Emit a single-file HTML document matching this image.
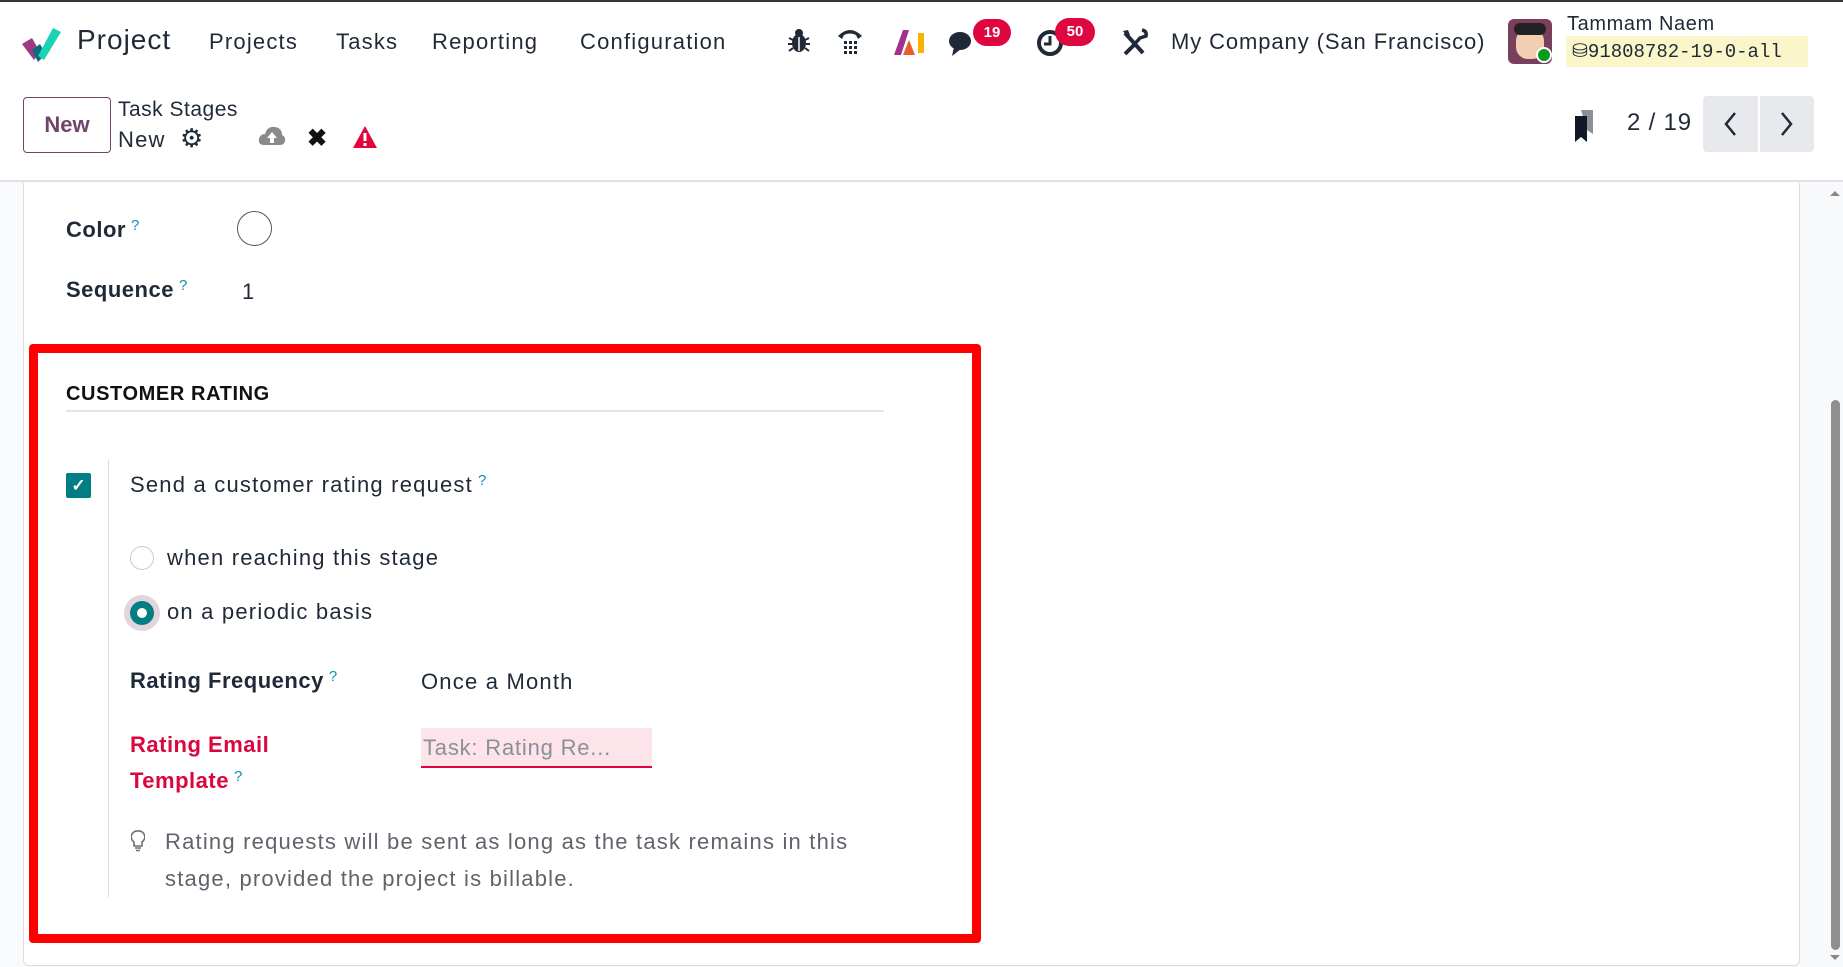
<!DOCTYPE html>
<html><head><meta charset="utf-8"><style>
*{margin:0;padding:0;box-sizing:border-box}
body{width:1843px;height:967px;overflow:hidden;background:#f9fafb;font-family:"Liberation Sans",sans-serif;color:#1f2937;position:relative}
.a{position:absolute;white-space:nowrap}
.t{font-size:22px;letter-spacing:1.2px}
.b{font-size:22px;font-weight:bold;letter-spacing:0.5px}
.q{color:#0a8fb5;font-size:15px;vertical-align:top;margin-left:5px;font-weight:normal}
</style></head><body>
<div class="a" style="left:0;top:0;width:1843px;height:182px;background:#fff;border-bottom:2px solid #dee2e6"></div>
<div class="a" style="left:0;top:0;width:1843px;height:2px;background:#3b3440"></div>
<svg class="a" style="left:20px;top:24px" width="42" height="38" viewBox="0 0 42 38"><path d="M2 20 L12 14 L20 28 L14 36Z" fill="#9b3b86"/><path d="M12 26 L20 20 L26 30 L18 38Z" fill="#0e6b7d"/><path d="M18 32 L33 4 L41 8 L24 36Z" fill="#1ad3b4"/></svg>
<div class="a" style="left:77px;top:24px;font-size:28px;letter-spacing:1px">Project</div>
<div class="a t" style="left:209px;top:29px">Projects</div>
<div class="a t" style="left:336px;top:29px">Tasks</div>
<div class="a t" style="left:432px;top:29px">Reporting</div>
<div class="a t" style="left:580px;top:29px">Configuration</div>
<svg class="a" style="left:787px;top:28px" width="24" height="26" viewBox="0 0 24 26"><ellipse cx="12" cy="15" rx="7" ry="9" fill="#1f2937"/><circle cx="12" cy="5" r="4" fill="#1f2937"/><path d="M2 10 L6 12 M22 10 L18 12 M1 16 H5 M23 16 H19 M2 23 L6 20 M22 23 L18 20" stroke="#1f2937" stroke-width="2"/><path d="M12 9 V23" stroke="#fff" stroke-width="1.5"/></svg>
<svg class="a" style="left:835px;top:26px" width="30" height="30" viewBox="0 0 30 30"><path d="M3 10 Q15 -2 27 10 L23 13 L21 9 Q15 6 9 9 L7 13Z" fill="#1f2937"/><g fill="#1f2937"><rect x="9" y="15" width="3" height="3"/><rect x="14" y="15" width="3" height="3"/><rect x="19" y="15" width="3" height="3"/><rect x="9" y="20" width="3" height="3"/><rect x="14" y="20" width="3" height="3"/><rect x="19" y="20" width="3" height="3"/><rect x="9" y="25" width="3" height="3"/><rect x="14" y="25" width="3" height="3"/><rect x="19" y="25" width="3" height="3"/></g></svg>
<svg class="a" style="left:893px;top:28px" width="32" height="28" viewBox="0 0 32 28"><path d="M1 27 L10 2 L16 2 L8 27Z" fill="#a2318f"/><path d="M10 27 L16 12 L22 27Z" fill="#e85b2b"/><rect x="25" y="5" width="6" height="20" fill="#f5b400"/></svg>
<svg class="a" style="left:948px;top:30px" width="30" height="28" viewBox="0 0 30 28"><ellipse cx="12" cy="11" rx="11" ry="9" fill="#1f2937"/><path d="M6 17 L4 26 L13 19Z" fill="#1f2937"/></svg>
<div class="a" style="left:973px;top:19px;width:38px;height:27px;border-radius:14px;background:#e0063f;color:#fff;font-size:15px;text-align:center;line-height:27px;font-weight:bold">19</div>
<svg class="a" style="left:1036px;top:28px" width="30" height="30" viewBox="0 0 30 30"><circle cx="14" cy="15" r="11" fill="none" stroke="#1f2937" stroke-width="4"/><path d="M14 8 V16 H8" stroke="#1f2937" stroke-width="3" fill="none"/></svg>
<div class="a" style="left:1055px;top:18px;width:40px;height:28px;border-radius:14px;background:#e0063f;color:#fff;font-size:15px;text-align:center;line-height:28px;font-weight:bold">50</div>
<svg class="a" style="left:1120px;top:28px" width="28" height="28" viewBox="0 0 28 28"><path d="M5 5 L23 25" stroke="#1f2937" stroke-width="4"/><path d="M3 3 L8 2 L10 7 L7 9Z" fill="#1f2937"/><path d="M22 2 Q27 3 26 8 L20 10 L12 19" stroke="#1f2937" stroke-width="3.5" fill="none"/><path d="M14 17 L5 26" stroke="#1f2937" stroke-width="4"/></svg>
<div class="a t" style="left:1171px;top:29px;letter-spacing:0.9px">My Company (San Francisco)</div>
<div class="a" style="left:1508px;top:19px;width:44px;height:45px;border-radius:6px;background:#7a3f5c;overflow:hidden"><div style="position:absolute;left:8px;top:10px;width:28px;height:30px;border-radius:12px;background:#f2cfb2"></div><div style="position:absolute;left:6px;top:4px;width:32px;height:12px;border-radius:8px;background:#222"></div></div>
<div class="a" style="left:1536px;top:47px;width:16px;height:16px;border-radius:50%;background:#0a9b1d;border:2px solid #fff"></div>
<div class="a" style="left:1567px;top:13px;font-size:20px;letter-spacing:0.6px">Tammam Naem</div>
<div class="a" style="left:1566px;top:36px;width:242px;height:31px;background:#fbf6c9"></div>
<div class="a" style="left:1572px;top:40px;font-family:'Liberation Mono',monospace;font-size:19px;color:#1f2937">⛁91808782-19-0-all</div>
<div class="a" style="left:23px;top:97px;width:88px;height:56px;border:1.5px solid #71456a;border-radius:4px;color:#71456a;font-size:22px;font-weight:bold;text-align:center;line-height:53px">New</div>
<div class="a" style="left:118px;top:98px;font-size:21px;letter-spacing:0.5px">Task Stages</div>
<div class="a t" style="left:118px;top:127px">New</div>
<div class="a" style="left:180px;top:123px;font-size:26px;color:#1f2937">⚙</div>
<svg class="a" style="left:258px;top:125px" width="28" height="22" viewBox="0 0 28 22"><path d="M6 20 Q0 20 1 14 Q2 9 7 9 Q9 1 17 2 Q24 3 24 10 Q28 12 27 16 Q26 20 22 20Z" fill="#8a8a8a"/><path d="M14 7 L9 13 H12 V18 H16 V13 H19Z" fill="#fff"/></svg>
<div class="a" style="left:307px;top:124px;font-size:24px;font-weight:bold;color:#111">✖</div>
<svg class="a" style="left:352px;top:125px" width="26" height="24" viewBox="0 0 26 24"><path d="M13 1 L25 23 H1Z" fill="#e0063f"/><rect x="11.5" y="8" width="3" height="8" fill="#fff"/><rect x="11.5" y="18" width="3" height="3" fill="#fff"/></svg>
<svg class="a" style="left:1573px;top:108px" width="26" height="34" viewBox="0 0 26 34"><path d="M8 2 H20 V26 L14 22Z" fill="#8a8f98"/><path d="M2 8 H14 V34 L8 29 L2 34Z" fill="#111827"/></svg>
<div class="a" style="left:1627px;top:109px;font-size:24px;letter-spacing:0.8px">2 / 19</div>
<div class="a" style="left:1703px;top:96px;width:111px;height:56px;border-radius:4px;background:#e7e9ed"></div>
<div class="a" style="left:1758px;top:96px;width:2px;height:56px;background:#fff"></div>
<svg class="a" style="left:1720px;top:110px" width="22" height="28" viewBox="0 0 22 28"><path d="M15 3 L6 14 L15 25" stroke="#1f2937" stroke-width="2.5" fill="none"/></svg>
<svg class="a" style="left:1775px;top:110px" width="22" height="28" viewBox="0 0 22 28"><path d="M7 3 L16 14 L7 25" stroke="#1f2937" stroke-width="2.5" fill="none"/></svg>
<div class="a" style="left:23px;top:183px;width:1777px;height:783px;background:#fff;border:1px solid #dcdcdc;border-top:none;border-radius:0 0 6px 6px"></div>
<div class="a" style="left:1800px;top:183px;width:43px;height:784px;background:#f8f9fa"></div>
<div class="a" style="left:1831px;top:400px;width:9px;height:550px;border-radius:5px;background:#8f8f8f"></div>
<div class="a" style="left:1830px;top:186px;width:0;height:0;border:5px solid transparent;border-bottom:5px solid #888"></div>
<div class="a" style="left:1830px;top:955px;width:0;height:0;border:5px solid transparent;border-top:5px solid #888"></div>

<div class="a b" style="left:66px;top:217px">Color<span class="q">?</span></div>
<div class="a" style="left:237px;top:211px;width:35px;height:35px;border-radius:50%;border:1.5px solid #555"></div>
<div class="a b" style="left:66px;top:277px">Sequence<span class="q">?</span></div>
<div class="a t" style="left:242px;top:279px">1</div>

<div class="a" style="left:29px;top:344px;width:952px;height:599px;border:9px solid #ff0000;border-radius:4px"></div>
<div class="a" style="left:66px;top:383px;font-size:20px;font-weight:bold;color:#111;letter-spacing:0.6px">CUSTOMER RATING</div>
<div class="a" style="left:66px;top:410px;width:818px;height:2px;background:#e2e4e7"></div>
<div class="a" style="left:66px;top:473px;width:25px;height:25px;background:#017e84;border-radius:2px;color:#fff;font-size:17px;text-align:center;line-height:25px;font-weight:bold">✓</div>
<div class="a" style="left:108px;top:460px;width:1px;height:437px;background:#dcdcdc"></div>
<div class="a t" style="left:130px;top:472px">Send a customer rating request<span class="q">?</span></div>
<div class="a" style="left:130px;top:546px;width:24px;height:24px;border-radius:50%;border:1px solid #ccc"></div>
<div class="a t" style="left:167px;top:545px">when reaching this stage</div>
<div class="a" style="left:124px;top:595px;width:36px;height:36px;border-radius:50%;background:#e3d5de"></div>
<div class="a" style="left:130px;top:601px;width:24px;height:24px;border-radius:50%;background:#017e84"></div>
<div class="a" style="left:137px;top:608px;width:10px;height:10px;border-radius:50%;background:#fff"></div>
<div class="a t" style="left:167px;top:599px">on a periodic basis</div>
<div class="a b" style="left:130px;top:668px">Rating Frequency<span class="q">?</span></div>
<div class="a t" style="left:421px;top:669px">Once a Month</div>
<div class="a b" style="left:130px;top:732px;color:#d9063f">Rating Email</div>
<div class="a b" style="left:130px;top:768px;color:#d9063f">Template<span class="q">?</span></div>
<div class="a" style="left:421px;top:728px;width:231px;height:40px;background:#fce4ea;border-bottom:2px solid #d9063f"></div>
<div class="a t" style="left:423px;top:735px;color:#8a8f98;letter-spacing:0.8px">Task: Rating Re...</div>
<svg class="a" style="left:131px;top:830px" width="14" height="22" viewBox="0 0 14 22"><path d="M7 1 A6 6 0 0 1 11 12 V16 H3 V12 A6 6 0 0 1 7 1Z M4 18 H10 M5 20.5 H9" stroke="#6b6f76" stroke-width="1.6" fill="none"/></svg>
<div class="a t" style="left:165px;top:823px;color:#5f646b;line-height:37px">Rating requests will be sent as long as the task remains in this<br>stage, provided the project is billable.</div>
</body></html>
